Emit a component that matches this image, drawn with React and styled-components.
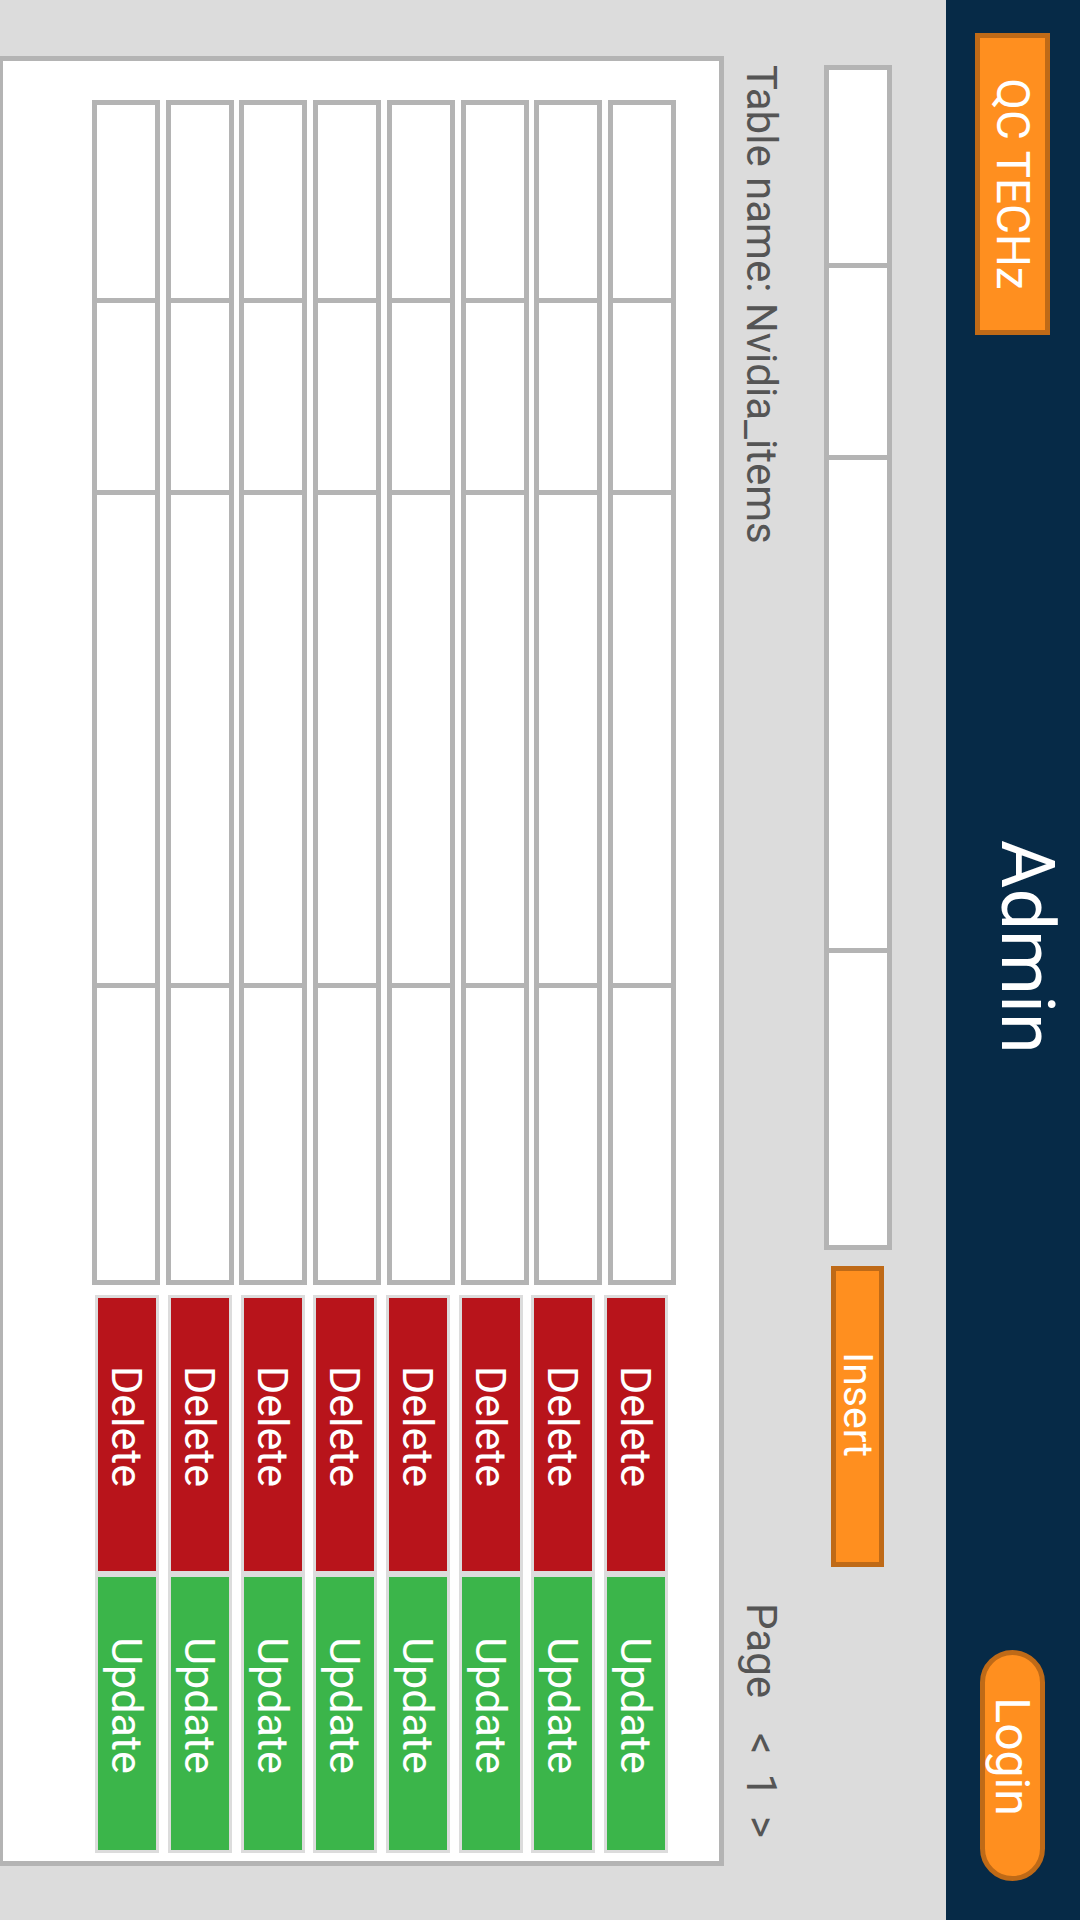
import React from 'react';
import styled, { createGlobalStyle } from 'styled-components';

const Global = createGlobalStyle`
  html, body {
    margin: 0;
    padding: 0;
    background: #dcdcdc;
    overflow: hidden;
  }
  body {
    font-family: Roboto, "Liberation Sans", Arial, sans-serif;
  }
  * { box-sizing: border-box; }
`;

const Viewport = styled.div`
  width: 1080px;
  height: 1920px;
  overflow: hidden;
  background: #dcdcdc;
`;

/* The screen shows a landscape page turned a quarter turn clockwise */
const Landscape = styled.div`
  width: 1920px;
  height: 1080px;
  transform-origin: 0 0;
  transform: translateX(1080px) rotate(90deg);
  display: flex;
  flex-direction: column;
  background: #dcdcdc;
  overflow: hidden;
`;

const Header = styled.header`
  flex: 0 0 134px;
  height: 134px;
  background: #062a47;
  display: grid;
  grid-template-columns: 1fr auto 1fr;
  align-items: center;
  padding: 0 39px 0 33px;
`;

const OrangeButton = styled.button`
  display: flex;
  align-items: center;
  justify-content: center;
  padding: 0 ${(p) => p.$shift || 0}px 0 0;
  width: ${(p) => p.$w}px;
  height: ${(p) => p.$h}px;
  border: 5px solid #bf6a17;
  border-radius: ${(p) => p.$radius || 0}px;
  background: #ff8f1f;
  color: #ffffff;
  font-family: Roboto, "Liberation Sans", Arial, sans-serif;
  font-size: ${(p) => p.$size}px;
  justify-self: ${(p) => p.$align || 'auto'};
  cursor: pointer;
`;

const Title = styled.h1`
  margin: 9px 20px 0 0;
  align-self: start;
  font-family: Roboto, "Liberation Sans", Arial, sans-serif;
  font-weight: 400;
  font-size: 74px;
  line-height: normal;
  color: #ffffff;
`;

const Main = styled.main`
  flex: 1;
  display: flex;
  flex-direction: column;
  padding-top: 54px;
`;

const InsertBar = styled.div`
  display: flex;
  align-items: center;
  gap: 16px;
  padding-left: 65px;
`;

const GridRow = styled.div`
  display: flex;
  width: 1185px;
  height: 68px;
  border: 5px solid #b4b4b4;
  background: #ffffff;
  flex-shrink: 0;
`;

const Cell = styled.div`
  flex: 0 0 ${(p) => p.$w}px;
  background: #ffffff;
  & + & {
    border-left: 5px solid #b4b4b4;
  }
`;

const TitleBar = styled.div`
  margin-top: 39px;
  padding: 0 82px 0 65px;
  display: flex;
  justify-content: space-between;
  font-size: 42px;
  line-height: 47px;
  color: #555555;
`;

const Pager = styled.div`
  display: flex;
  gap: 19px;
`;

const PagerLabel = styled.span`
  margin-right: 16px;
`;

const Panel = styled.section`
  margin: 14px 54px 0 56px;
  height: 726px;
  flex-shrink: 0;
  border: 5px solid #b4b4b4;
  background: #ffffff;
  padding: 43px 0 0 39px;
  display: flex;
  align-items: flex-start;
  gap: 10px;
`;

const TableCol = styled.div`
  display: flex;
  flex-direction: column;
  gap: 5.72px;
`;

const ActionsCol = styled.div`
  display: flex;
  flex-direction: column;
  gap: 8.7px;
  margin-top: 8px;
`;

const ActionRow = styled.div`
  display: flex;
`;

const ActionButton = styled.button`
  display: flex;
  align-items: center;
  justify-content: center;
  padding: 0 16px 0 0;
  width: 279px;
  height: 64px;
  border: 3px solid #dcdcdc;
  background: ${(p) => (p.$variant === 'delete' ? '#b8141b' : '#3bb54a')};
  color: #ffffff;
  font-family: Roboto, "Liberation Sans", Arial, sans-serif;
  font-size: 43px;
  cursor: pointer;
`;

const COLS = [193, 192, 493, 297];
const ROWS = Array.from({ length: 8 }, (_, i) => i);

function Row() {
  return (
    <GridRow>
      {COLS.map((w, i) => (
        <Cell key={i} $w={w} />
      ))}
    </GridRow>
  );
}

export default function App() {
  return (
    <Viewport>
      <Global />
      <Landscape>
        <Header>
          <OrangeButton $w={302} $h={75} $size={46} $align="start">
            QC TECHz
          </OrangeButton>
          <Title>Admin</Title>
          <OrangeButton $w={231} $h={65} $size={48} $radius={33} $shift={18} $align="end">
            Login
          </OrangeButton>
        </Header>
        <Main>
          <InsertBar>
            <Row />
            <OrangeButton $w={301} $h={53} $size={41} $shift={24}>
              Insert
            </OrangeButton>
          </InsertBar>
          <TitleBar>
            <span>Table name: Nvidia_items</span>
            <Pager>
              <PagerLabel>Page</PagerLabel>
              <span>&lt;</span>
              <span>1</span>
              <span>&gt;</span>
            </Pager>
          </TitleBar>
          <Panel>
            <TableCol>
              {ROWS.map((r) => (
                <Row key={r} />
              ))}
            </TableCol>
            <ActionsCol>
              {ROWS.map((r) => (
                <ActionRow key={r}>
                  <ActionButton $variant="delete">Delete</ActionButton>
                  <ActionButton $variant="update">Update</ActionButton>
                </ActionRow>
              ))}
            </ActionsCol>
          </Panel>
        </Main>
      </Landscape>
    </Viewport>
  );
}
